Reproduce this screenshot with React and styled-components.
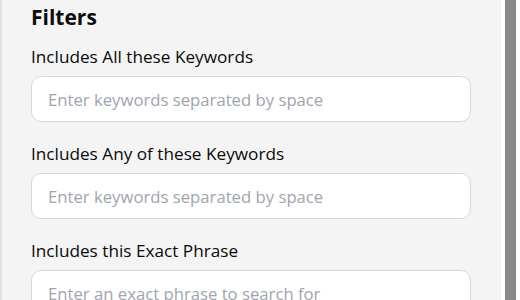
import React from "react";
import styled, { createGlobalStyle } from "styled-components";

const GlobalStyle = createGlobalStyle`
  html, body {
    margin: 0;
    padding: 0;
    background: #ffffff;
  }
  body {
    font-family: "Open Sans", "Noto Sans", "Liberation Sans", sans-serif;
    color: #111111;
  }
`;

const Frame = styled.div`
  display: flex;
  height: 300px;
  overflow: hidden;
`;

const EdgeStrip = styled.div`
  width: 2px;
  flex-shrink: 0;
  background: #e2e2e4;
`;

const Panel = styled.div`
  flex: 1;
  background: #f4f4f4;
  padding: 3px 30px 0 29px;
`;

const Heading = styled.h2`
  margin: 0 0 14px;
  font-size: 21px;
  line-height: 28px;
  font-weight: 700;
  color: #0d0d0d;
`;

const Field = styled.div`
  margin-bottom: 20px;
`;

const Label = styled.label`
  display: block;
  margin-bottom: 7px;
  font-size: 17.2px;
  line-height: 24px;
  font-weight: 400;
  color: #0a0a0a;
`;

const Input = styled.input`
  display: block;
  width: 100%;
  height: 46px;
  box-sizing: border-box;
  padding: 0 16px;
  border: 1px solid #d6d6de;
  border-radius: 10px;
  background: #ffffff;
  font-family: inherit;
  font-size: 16.7px;
  color: #111111;
  outline: none;

  &::placeholder {
    color: #a0a4ae;
  }
`;

const ScrollTrack = styled.div`
  width: 19px;
  flex-shrink: 0;
  box-sizing: border-box;
  padding: 0 4px;
  background: #ffffff;
`;

const ScrollThumb = styled.div`
  height: 100%;
  background: #898989;
`;

const fields = [
  { id: "all", label: "Includes All these Keywords", placeholder: "Enter keywords separated by space" },
  { id: "any", label: "Includes Any of these Keywords", placeholder: "Enter keywords separated by space" },
  { id: "exact", label: "Includes this Exact Phrase", placeholder: "Enter an exact phrase to search for" },
];

function App() {
  return (
    <>
      <GlobalStyle />
      <Frame>
        <EdgeStrip />
        <Panel>
          <Heading>Filters</Heading>
          {fields.map((f) => (
            <Field key={f.id}>
              <Label htmlFor={f.id}>{f.label}</Label>
              <Input id={f.id} type="text" placeholder={f.placeholder} />
            </Field>
          ))}
        </Panel>
        <ScrollTrack>
          <ScrollThumb />
        </ScrollTrack>
      </Frame>
    </>
  );
}

export default App;
